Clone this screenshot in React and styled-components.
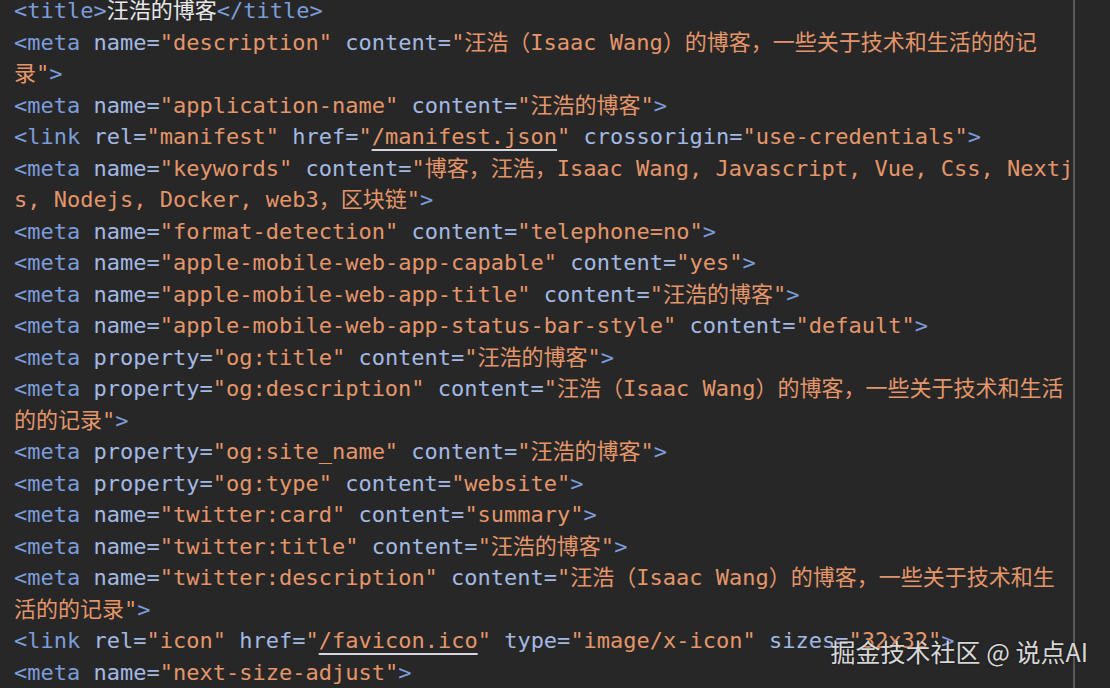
import React from "react";
import styled, { createGlobalStyle } from "styled-components";

const Global = createGlobalStyle`
  html, body { margin: 0; padding: 0; background: #272727; }
  body { width: 1110px; height: 688px; overflow: hidden; }
`;

const Editor = styled.div`
  position: relative;
  width: 1110px;
  height: 688px;
  overflow: hidden;
  background: #272727;
`;

const Code = styled.div`
  display: flex;
  flex-direction: column;
  margin-top: -5px;
  padding-left: 14px;
  font-family: "DejaVu Sans Mono", "Noto Sans CJK SC", monospace;
  font-size: 22px;
  line-height: 31.5px;
  white-space: pre;
`;

const Line = styled.div`
  height: 31.5px;
`;

const colors = {
  t: "#7c9ddb",
  a: "#a3b9e4",
  s: "#e4966a",
  u: "#e4966a",
  x: "#e8e8e8",
};

const Tok = styled.span`
  color: ${(p) => colors[p.$k]};
  ${(p) =>
    p.$k === "u"
      ? "text-decoration: underline; text-underline-offset: 5px; text-decoration-thickness: 2px; text-decoration-color: #d4d6de;"
      : ""}
`;

const Ruler = styled.div`
  position: absolute;
  top: 0;
  bottom: 0;
  left: 1073px;
  width: 2px;
  background: #575757;
`;

const Watermark = styled.div`
  position: absolute;
  right: 22px;
  top: 633px;
  font-family: "Noto Sans CJK SC", "Noto Sans", sans-serif;
  font-size: 25px;
  line-height: 36px;
  color: rgba(236, 236, 236, 0.92);
  text-shadow: 0 0 2px rgba(0, 0, 0, 0.6);
  white-space: nowrap;
`;

const m = (attr, val) => [["a", ` ${attr}=`], ["s", `"${val}"`]];

const lines = [
  [["t", "<title>"], ["x", "汪浩的博客"], ["t", "</title>"]],
  [["t", "<meta"], ...m("name", "description"), ["a", " content="], ["s", "\"汪浩（Isaac Wang）的博客，一些关于技术和生活的的记"]],
  [["s", "录\""], ["t", ">"]],
  [["t", "<meta"], ...m("name", "application-name"), ...m("content", "汪浩的博客"), ["t", ">"]],
  [["t", "<link"], ...m("rel", "manifest"), ["a", " href="], ["s", "\""], ["u", "/manifest.json"], ["s", "\""], ...m("crossorigin", "use-credentials"), ["t", ">"]],
  [["t", "<meta"], ...m("name", "keywords"), ["a", " content="], ["s", "\"博客，汪浩，Isaac Wang, Javascript, Vue, Css, Nextj"]],
  [["s", "s, Nodejs, Docker, web3，区块链\""], ["t", ">"]],
  [["t", "<meta"], ...m("name", "format-detection"), ...m("content", "telephone=no"), ["t", ">"]],
  [["t", "<meta"], ...m("name", "apple-mobile-web-app-capable"), ...m("content", "yes"), ["t", ">"]],
  [["t", "<meta"], ...m("name", "apple-mobile-web-app-title"), ...m("content", "汪浩的博客"), ["t", ">"]],
  [["t", "<meta"], ...m("name", "apple-mobile-web-app-status-bar-style"), ...m("content", "default"), ["t", ">"]],
  [["t", "<meta"], ...m("property", "og:title"), ...m("content", "汪浩的博客"), ["t", ">"]],
  [["t", "<meta"], ...m("property", "og:description"), ["a", " content="], ["s", "\"汪浩（Isaac Wang）的博客，一些关于技术和生活"]],
  [["s", "的的记录\""], ["t", ">"]],
  [["t", "<meta"], ...m("property", "og:site_name"), ...m("content", "汪浩的博客"), ["t", ">"]],
  [["t", "<meta"], ...m("property", "og:type"), ...m("content", "website"), ["t", ">"]],
  [["t", "<meta"], ...m("name", "twitter:card"), ...m("content", "summary"), ["t", ">"]],
  [["t", "<meta"], ...m("name", "twitter:title"), ...m("content", "汪浩的博客"), ["t", ">"]],
  [["t", "<meta"], ...m("name", "twitter:description"), ["a", " content="], ["s", "\"汪浩（Isaac Wang）的博客，一些关于技术和生"]],
  [["s", "活的的记录\""], ["t", ">"]],
  [["t", "<link"], ...m("rel", "icon"), ["a", " href="], ["s", "\""], ["u", "/favicon.ico"], ["s", "\""], ...m("type", "image/x-icon"), ...m("sizes", "32x32"), ["t", ">"]],
  [["t", "<meta"], ...m("name", "next-size-adjust"), ["t", ">"]],
];

export default function App() {
  return (
    <Editor>
      <Global />
      <Code>
        {lines.map((toks, i) => (
          <Line key={i}>
            {toks.map(([k, text], j) => (
              <Tok key={j} $k={k}>
                {text}
              </Tok>
            ))}
          </Line>
        ))}
      </Code>
      <Ruler />
      <Watermark>掘金技术社区 @ 说点AI</Watermark>
    </Editor>
  );
}
